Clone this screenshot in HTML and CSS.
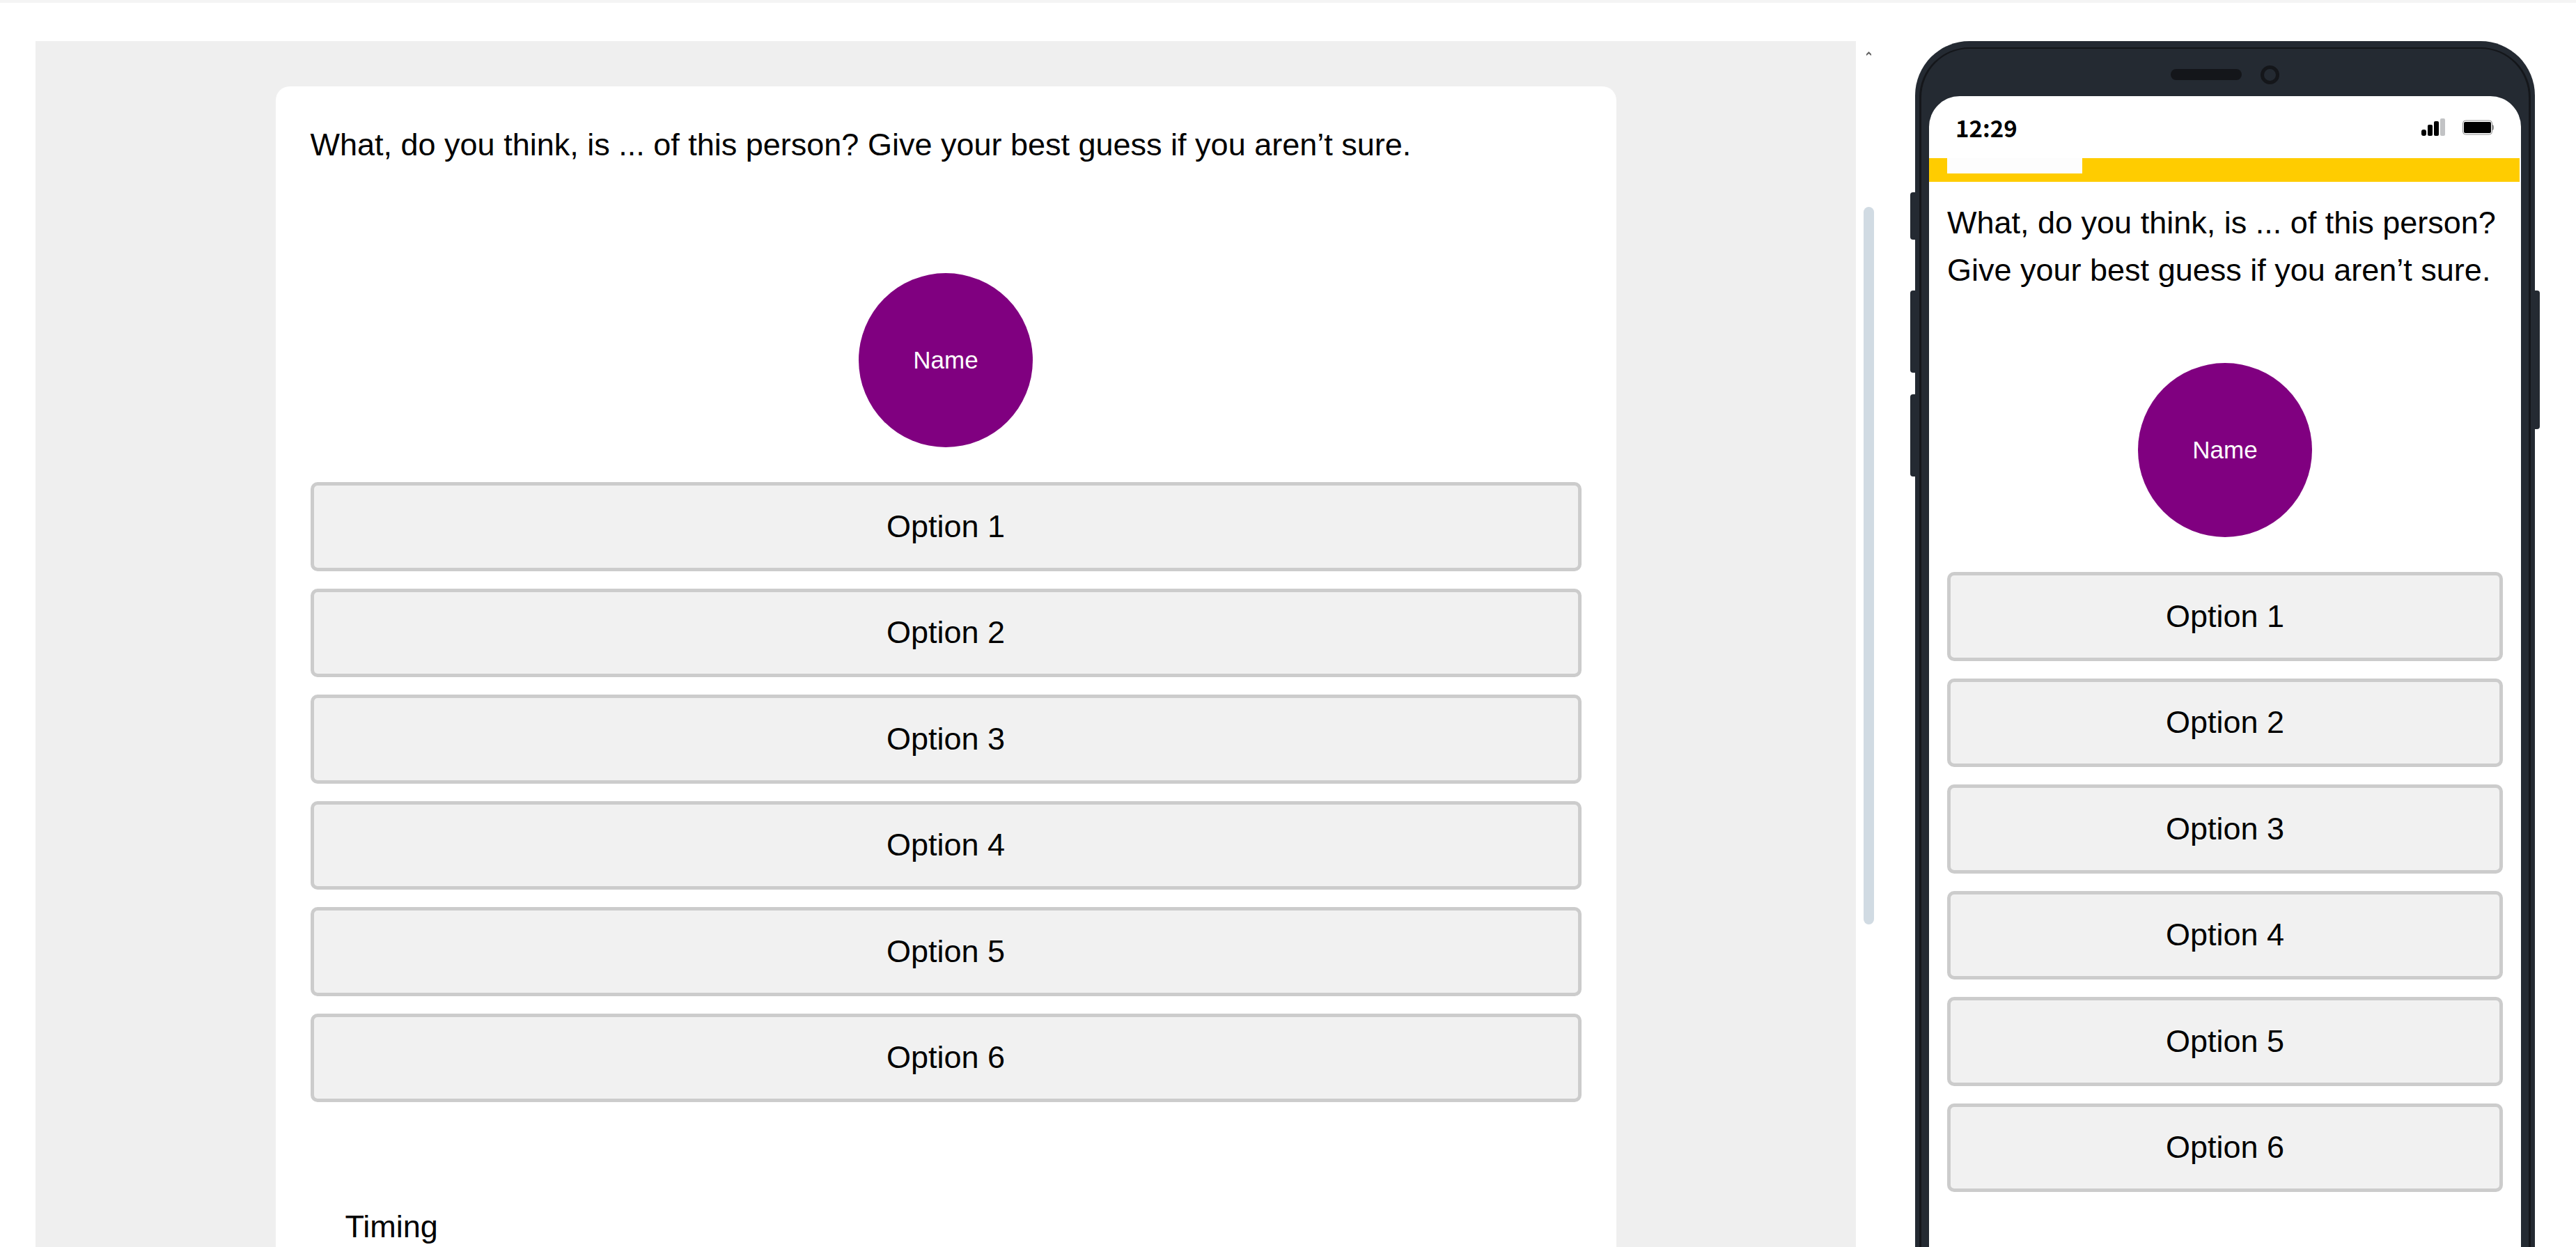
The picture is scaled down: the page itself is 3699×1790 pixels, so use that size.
FILE: index.html
```html
<!DOCTYPE html>
<html lang="en">
<head>
<meta charset="utf-8">
<title>Survey preview</title>
<link rel="stylesheet" href="styles.css">
</head>
<body>
<main class="preview">
  <section class="desktop" aria-label="Desktop preview">
    <div class="card">
      <p class="question">What, do you think, is ... of this person? Give your best guess if you aren’t sure.</p>
      <div class="avatar">Name</div>
      <div class="options">
        <button class="option" type="button">Option 1</button>
        <button class="option" type="button">Option 2</button>
        <button class="option" type="button">Option 3</button>
        <button class="option" type="button">Option 4</button>
        <button class="option" type="button">Option 5</button>
        <button class="option" type="button">Option 6</button>
      </div>
      <p class="timing">Timing</p>
    </div>
  </section>
  <div class="scrollbar" aria-hidden="true">
    <svg class="scroll-up" width="7" height="7" viewBox="0 0 7 7"><path d="M0 6V3.500L3.500 0 7 3.500V6L3.500 3z" fill="#606060"/></svg>
    <div class="thumb"></div>
  </div>
  <section class="phone" aria-label="Mobile preview">
    <span class="side-key mute"></span>
    <span class="side-key volume-up"></span>
    <span class="side-key volume-down"></span>
    <span class="side-key power"></span>
    <div class="earpiece"><span class="speaker"></span><span class="camera"></span></div>
    <div class="screen">
      <header class="status">
        <time class="clock">12:29</time>
        <svg class="signal" width="35" height="26" viewBox="0 0 35 26"><rect x="0" y="16" width="7" height="9" rx="3"/><rect x="9" y="9" width="7" height="16" rx="2"/><rect x="18" y="4" width="7" height="21" rx="2"/><rect x="27" y="0" width="7" height="25" rx="2" fill="#c2c3c5"/></svg>
        <svg class="battery" width="46" height="22" viewBox="0 0 46 22"><rect x="0.500" y="1" width="42" height="20" rx="4" fill="none" stroke="#8c8c8c"/><rect x="2" y="3" width="39" height="16" rx="2"/><path d="M43 7q2 0 2 4t-2 4z" fill="#8c8c8c"/></svg>
      </header>
      <div class="banner"><div class="banner-logo"></div></div>
      <div class="mobile-body">
        <p class="question">What, do you think, is ... of this person? Give your best guess if you aren’t sure.</p>
        <div class="avatar">Name</div>
        <div class="options">
          <button class="option" type="button">Option 1</button>
          <button class="option" type="button">Option 2</button>
          <button class="option" type="button">Option 3</button>
          <button class="option" type="button">Option 4</button>
          <button class="option" type="button">Option 5</button>
          <button class="option" type="button">Option 6</button>
        </div>
      </div>
    </div>
  </section>
</main>
</body>
</html>
```
FILE: styles.css
```css
* {
  box-sizing: border-box;
}

body {
  margin: 0;
  height: 100vh;
  overflow: hidden;
  border-top: 4px solid #f4f4f4;
  background: #fff;
  color: #000;
  font-family: "Liberation Sans", Arial, sans-serif;
  font-size: 45px;
  line-height: 68px;
}

p {
  margin: 0;
}

.preview {
  display: flex;
  height: 100%;
  padding: 55px 59px 0 51px;
}

.desktop {
  flex: 1;
  min-width: 0;
  padding-top: 65px;
  overflow: hidden;
  background: #efefef;
}

.card {
  max-width: 1925px;
  min-height: 100%;
  margin: 0 auto;
  padding: 50px;
  border-radius: 20px 20px 0 0;
  background: #fff;
}

.avatar {
  display: flex;
  align-items: center;
  justify-content: center;
  width: 250px;
  height: 250px;
  margin: 150px auto 50px;
  border-radius: 50%;
  background: purple;
  color: #fff;
  font-size: 35px;
}

.options {
  display: flex;
  flex-direction: column;
  gap: 25px;
  min-height: 890px;
}

.option {
  flex: 1;
  width: 100%;
  padding: 0;
  border: 5px solid #ccc;
  border-radius: 10px;
  background: #f1f1f1;
  color: #000;
  font: inherit;
}

.timing {
  padding: 145px 50px 0;
}

/* Scroll track between the two previews */
.scrollbar {
  display: flex;
  flex-direction: column;
  align-items: center;
  width: 37px;
  margin-right: 48px;
  padding-top: 15px;
}

.thumb {
  width: 15px;
  height: 1030px;
  margin-top: 216px;
  border-radius: 8px;
  background: #d1dbe3;
}

/* Phone frame */
.phone {
  position: relative;
  display: flex;
  flex-direction: column;
  flex: none;
  width: 890px;
  padding: 0 20px;
  border-radius: 78px 78px 0 0;
  background: #242a32;
}

.phone::before {
  content: "";
  position: absolute;
  inset: 9px 6px 0;
  border: solid #14161a;
  border-width: 2px 3px 0;
  border-radius: 72px 72px 0 0;
}

.side-key {
  position: absolute;
  left: -7px;
  width: 7px;
  height: 118px;
  border-radius: 4px 0 0 4px;
  background: #242a32;
}

.mute {
  top: 217px;
  height: 68px;
}

.volume-up {
  top: 358px;
}

.volume-down {
  top: 507px;
}

.power {
  top: 358px;
  right: -7px;
  left: auto;
  height: 199px;
  border-radius: 0 4px 4px 0;
}

.earpiece {
  display: flex;
  align-items: center;
  justify-content: center;
  gap: 27px;
  height: 79px;
  padding-top: 17px;
}

.speaker {
  width: 102px;
  height: 16px;
  border-radius: 8px;
  background: #14161a;
}

.camera {
  width: 27px;
  height: 27px;
  border: 5px solid #14161a;
  border-radius: 50%;
}

.screen {
  position: relative;
  flex: 1;
  min-height: 0;
  overflow: hidden;
  border-radius: 44px 44px 0 0;
  background: #fff;
}

.status {
  display: flex;
  align-items: center;
  height: 89px;
  padding: 0 38px;
}

.clock {
  flex: 1;
  font-family: "Noto Sans CJK SC", "Liberation Sans", sans-serif;
  font-size: 33px;
  font-weight: bold;
}

.signal {
  margin-right: 24px;
}

.banner {
  height: 34px;
  margin-right: 2px;
  padding: 0 26px;
  background: #fc0;
}

.banner-logo {
  width: 194px;
  height: 22px;
  background: #fdfdfd;
}

.mobile-body {
  padding: 25px 26px;
}

.mobile-body .avatar {
  margin-top: 99px;
}
```
